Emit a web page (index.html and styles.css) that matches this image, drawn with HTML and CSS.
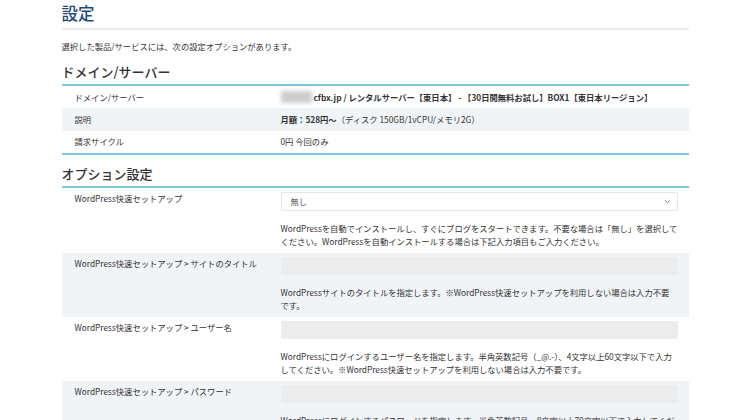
FILE: index.html
```html
<!DOCTYPE html>
<html lang="ja">
<head>
    <meta charset="UTF-8">
    <meta name="viewport" content="width=device-width, initial-scale=1.0">
    <title>設定</title>
    <link rel="stylesheet" href="styles.css">
</head>
<body>

<div class="page">
    <h1 class="page-title">設定</h1>
    <p class="lead">選択した製品/サービスには、次の設定オプションがあります。</p>

    <h2 class="section-title">ドメイン/サーバー</h2>
    <div class="summary">
        <div class="summary-row">
            <div class="summary-label">ドメイン/サーバー</div>
            <div class="summary-value"><span class="masked"></span><b>cfbx.jp / レンタルサーバー【東日本】 - 【30日間無料お試し】BOX1【東日本リージョン】</b></div>
        </div>
        <div class="summary-row">
            <div class="summary-label">説明</div>
            <div class="summary-value"><b>月額：528円～</b>（ディスク 150GB/1vCPU/メモリ2G）</div>
        </div>
        <div class="summary-row">
            <div class="summary-label">請求サイクル</div>
            <div class="summary-value">0円 今回のみ</div>
        </div>
    </div>

    <h2 class="section-title">オプション設定</h2>
    <div class="options">
        <div class="option-row">
            <div class="option-label">WordPress快速セットアップ</div>
            <div class="option-field">
                <div class="select">
                    <span>無し</span>
                    <svg width="7" height="5" viewBox="0 0 7 5"><path d="M1 1.2 3.5 3.6 6 1.2" fill="none" stroke="#888" stroke-width="1"/></svg>
                </div>
                <p class="help">WordPressを自動でインストールし、すぐにブログをスタートできます。不要な場合は「無し」を選択してください。WordPressを自動インストールする場合は下記入力項目もご入力ください。</p>
            </div>
        </div>
        <div class="option-row">
            <div class="option-label">WordPress快速セットアップ &gt; サイトのタイトル</div>
            <div class="option-field">
                <div class="input"></div>
                <p class="help">WordPressサイトのタイトルを指定します。※WordPress快速セットアップを利用しない場合は入力不要です。</p>
            </div>
        </div>
        <div class="option-row">
            <div class="option-label">WordPress快速セットアップ &gt; ユーザー名</div>
            <div class="option-field">
                <div class="input"></div>
                <p class="help">WordPressにログインするユーザー名を指定します。半角英数記号（_@.-）、4文字以上60文字以下で入力してください。※WordPress快速セットアップを利用しない場合は入力不要です。</p>
            </div>
        </div>
        <div class="option-row">
            <div class="option-label">WordPress快速セットアップ &gt; パスワード</div>
            <div class="option-field">
                <div class="input"></div>
                <p class="help">WordPressにログインするパスワードを指定します。半角英数記号、8文字以上70文字以下で入力してください。※WordPress快速セットアップを利用しない場合は入力不要です。</p>
            </div>
        </div>
    </div>
</div>

</body>
</html>
```

FILE: styles.css
```css
* {box-sizing: border-box; margin: 0; padding: 0;}
body {background-color: #fff; color: #333; font-family: "Noto Sans CJK JP", "Noto Sans", sans-serif; font-size: 8.3px; line-height: 13px;}
.page {width: 627px; margin: 0 auto;}

.page-title {font-size: 16.5px; font-weight: 500; line-height: 24px; color: #1f4b78; padding: 1px 0 3px; border-bottom: 2px solid #ececec;}
.lead {margin-top: 10px;}
.section-title {font-size: 13px; font-weight: 500; line-height: 18px; color: #333; margin-top: 10px; padding-bottom: 3px; border-bottom: 2px solid #7fc4e0;}

.summary {border-bottom: 2px solid #7fc4e0;}
.summary-row {display: flex; height: 22.3px; align-items: center;}
.summary-row:nth-child(even) {background-color: #f1f4f7;}
.summary-label {width: 219px; padding-left: 13px;}
.summary-value {flex: 1; display: flex; align-items: center;}
.summary-value b {font-weight: 700;}
.masked {display: inline-block; width: 31px; height: 12px; margin-right: 2px; background-color: #cdcdcd; filter: blur(2px);}

.option-row {display: flex; padding: 4px 11px 5px 0;}
.option-row:nth-child(even) {background-color: #f1f4f7;}
.option-label {width: 219px; padding: 0 0 0 13px;}
.option-field {flex: 1;}
.select {display: flex; align-items: center; justify-content: space-between; height: 19px; padding: 0 6px 0 9px; background-color: #fff; border: 1px solid #e3e6ea; border-radius: 2px; color: #555;}
.input {height: 18px; background-color: #ececec; border-radius: 2px;}
.help {margin-top: 11px;}
```
